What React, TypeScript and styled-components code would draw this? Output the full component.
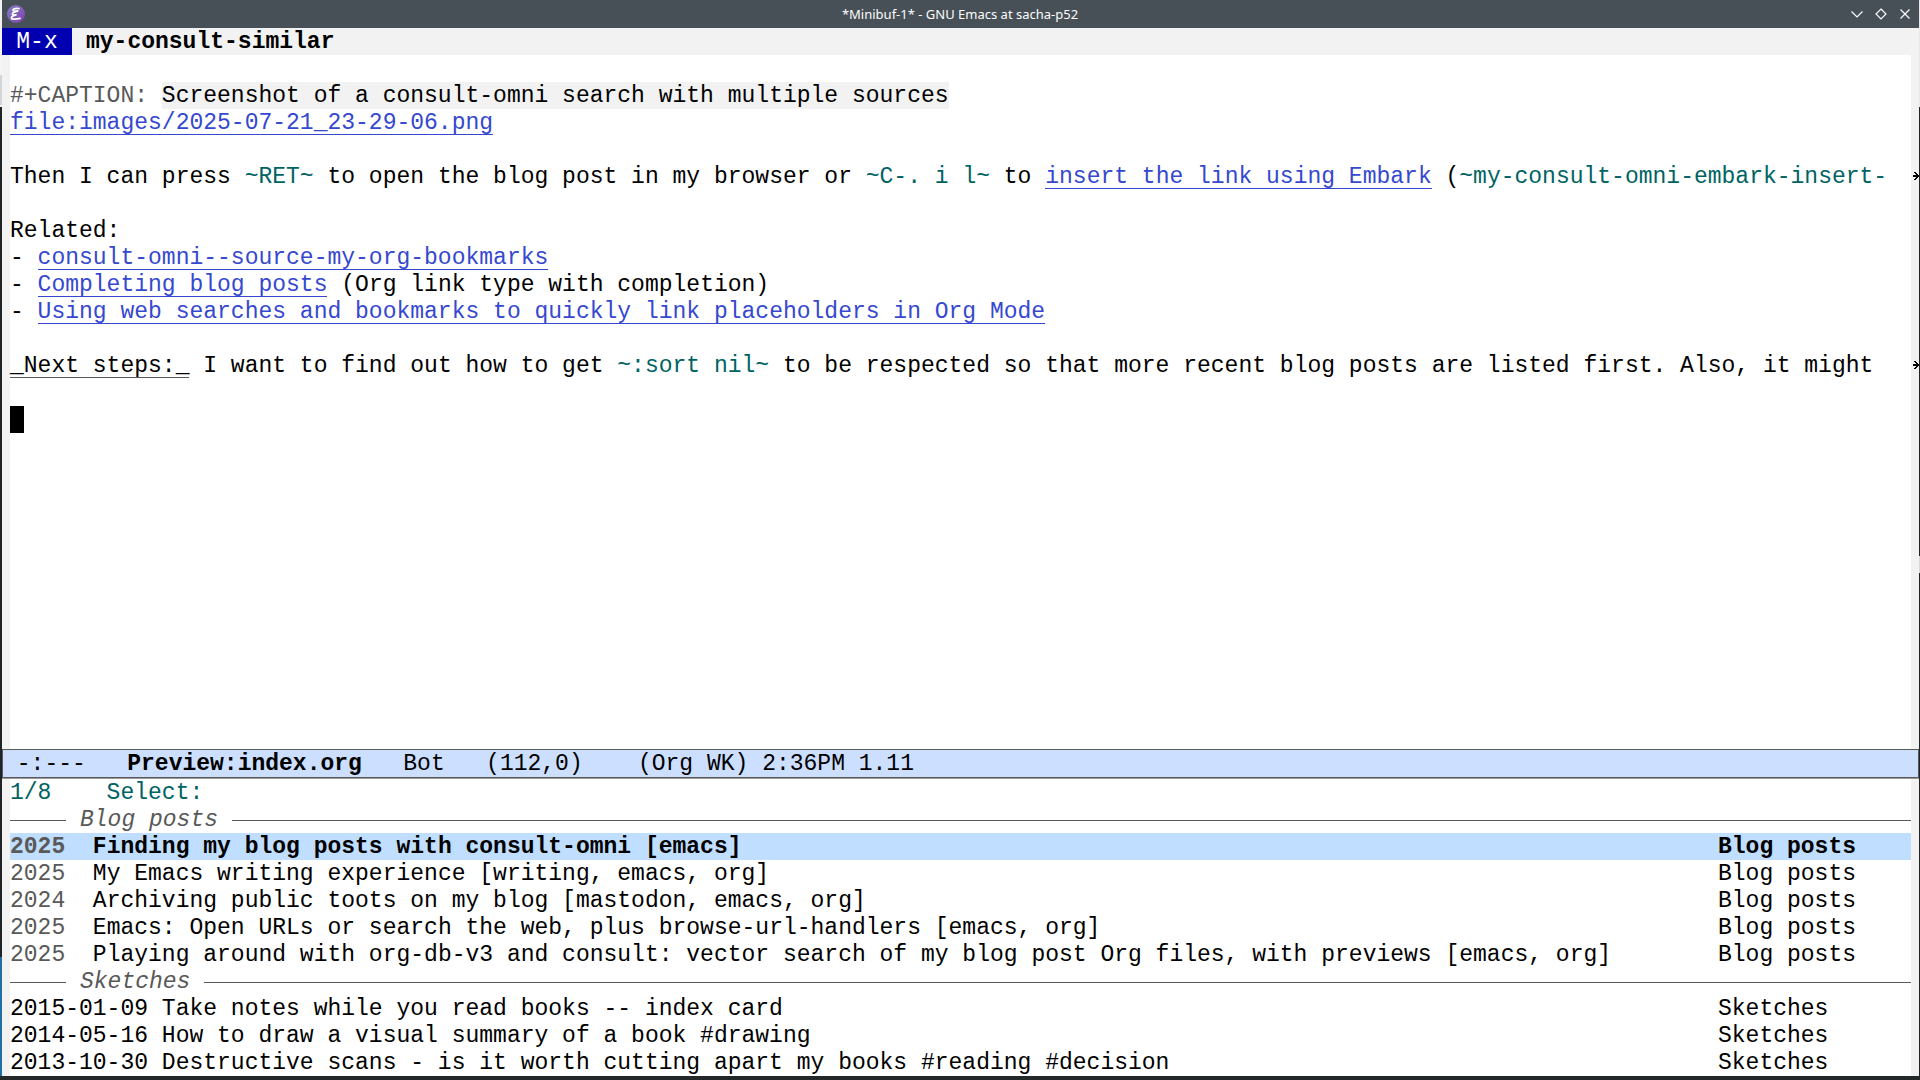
import React from "react";
import styled, { createGlobalStyle, css } from "styled-components";

const mono = '"Liberation Mono", "Courier New", monospace';
const sans = '"Noto Sans", sans-serif';

const GlobalStyle = createGlobalStyle`
  * { box-sizing: border-box; }
  body { margin: 0; background: #232829; }
`;

const Desktop = styled.div`
  display: flex;
  min-height: 100vh;
  padding-bottom: 4px;
  background: #232829;
`;

const LeftEdge = styled.div`
  flex: none;
  width: 2px;
  display: flex;
  flex-direction: column;
`;

const EdgePart = styled.div<{ $color: string; $height?: number }>`
  background: ${(p) => p.$color};
  ${(p) => (p.$height ? css`height: ${p.$height}px;` : css`flex: 1;`)}
`;

const RightEdge = styled(LeftEdge)`
  width: 1px;
`;

const Frame = styled.main`
  flex: 1;
  min-width: 0;
  display: flex;
  flex-direction: column;
  background: #ffffff;
  color: #000000;
  font: 23px/26px ${mono};
`;

const TitleBar = styled.header`
  display: grid;
  grid-template-columns: 84px 1fr 84px;
  align-items: center;
  height: 28px;
  padding: 0 6px 0 5px;
  background: #475057;
  color: #fcfcfc;
`;

const Title = styled.h1`
  margin: 0;
  text-align: center;
  font: 400 13px/18px ${sans};
`;

const Controls = styled.div`
  display: flex;
  justify-content: flex-end;
  gap: 8px;
`;

const ControlButton = styled.button`
  display: flex;
  width: 16px;
  height: 16px;
  padding: 0;
  border: 0;
  background: none;
  color: inherit;
`;

const HeaderLine = styled.div`
  display: flex;
  gap: 14px;
  background: #f2f2f2;
  white-space: pre;
`;

const KeyTag = styled.span`
  width: 70px;
  padding-top: 1px;
  text-align: center;
  background: #0000b0;
  color: #ffffff;
`;

const Command = styled.strong`
  padding-top: 1px;
`;

const Pane = styled.section<{ $grow?: boolean }>`
  display: flex;
  flex-direction: column;
  ${(p) => p.$grow && css`flex: 1;`}
  border: solid #f2f2f2;
  border-width: 0 8px;
`;

const Line = styled.div`
  position: relative;
  height: 27px;
  padding-top: 1px;
  white-space: pre;
`;

const Continuation = styled.svg`
  position: absolute;
  right: -8px;
  top: 9px;
  width: 8px;
  height: 8px;
`;

const Muted = styled.span`
  color: #595959;
`;

const Caption = styled.span`
  padding-top: 1px;
  background: #f2f2f2;
`;

const Verbatim = styled.code`
  font: inherit;
  color: #006363;
`;

const OrgLink = styled.a`
  display: inline-block;
  height: 25px;
  color: #3548cf;
  text-decoration: none;
  box-shadow: inset 0 -1px #3548cf;
`;

const Underlined = styled.span`
  display: inline-block;
  height: 25px;
  box-shadow: inset 0 -1px #595959;
`;

const Cursor = styled.span`
  display: block;
  width: 14px;
  height: 27px;
  margin-top: -1px;
  background: #000000;
`;

const ModeLine = styled.div`
  height: 29px;
  padding-top: 1px;
  border: 1px solid #595959;
  background: #ccdfff;
  white-space: pre;
`;

const Divider = styled.div`
  height: 1px;
  background: #9a9a9a;
`;

const Prompt = styled(Line)`
  color: #006363;
`;

const GroupTitle = styled.h2`
  display: grid;
  grid-template-columns: 56px auto 1fr;
  gap: 14px;
  height: 27px;
  margin: 0;
  color: #595959;
  font: italic 400 23px/26px ${mono};

  &::before,
  &::after {
    content: "";
    height: 1px;
    margin-top: 14px;
    background: #595959;
  }
`;

const GroupName = styled.span`
  padding-top: 1px;
`;

const List = styled.ul`
  margin: 0;
  padding: 0;
  list-style: none;
`;

const Candidate = styled.li<{ $selected?: boolean }>`
  display: grid;
  grid-template-columns: 1fr 193px;
  height: 27px;
  padding-top: 1px;
  white-space: pre;
  ${(p) =>
    p.$selected &&
    css`
      background: #c0deff;
      font-weight: 700;
    `}
`;

function EmacsIcon() {
  return (
    <svg width="20" height="20" viewBox="0 0 20 20" aria-hidden="true">
      <defs>
        <linearGradient id="emacs" x1="0" y1="0" x2="1" y2="1">
          <stop offset="0" stopColor="#8381c5" />
          <stop offset="1" stopColor="#7f3fb0" />
        </linearGradient>
      </defs>
      <circle cx="9" cy="10" r="9" fill="url(#emacs)" />
      <path
        d="M12 4.600C10 4 5.800 4.700 6 6.200c.2 1.200 3 1 4.800.7C8.500 7.600 5.200 8.600 5.400 10c.2 1.200 2.300 1 3.600.9C6.800 11.500 4.200 12.500 4.500 14c.3 1.800 5 1.300 8.500.4"
        fill="none"
        stroke="#ffffff"
        strokeWidth="1.700"
        strokeLinecap="round"
        strokeLinejoin="round"
      />
    </svg>
  );
}

function ControlIcon({ d }: { d: string }) {
  return (
    <svg width="16" height="16" viewBox="0 0 16 16" fill="none" stroke="currentColor" strokeWidth="1.200" aria-hidden="true">
      <path d={d} />
    </svg>
  );
}

function TruncatedMark() {
  return (
    <Continuation viewBox="0 0 8 8" shapeRendering="crispEdges" aria-hidden="true">
      <path d="M3 0h2v1H3zM4 1h2v1H4zM5 2h2v1H5zM2 3h6v2H2zM5 5h2v1H5zM4 6h2v1H4zM3 7h2v1H3z" fill="#000000" />
    </Continuation>
  );
}

const posts = [
  ["2025", "Finding my blog posts with consult-omni [emacs]"],
  ["2025", "My Emacs writing experience [writing, emacs, org]"],
  ["2024", "Archiving public toots on my blog [mastodon, emacs, org]"],
  ["2025", "Emacs: Open URLs or search the web, plus browse-url-handlers [emacs, org]"],
  ["2025", "Playing around with org-db-v3 and consult: vector search of my blog post Org files, with previews [emacs, org]"],
];

const sketches = [
  "2015-01-09 Take notes while you read books -- index card",
  "2014-05-16 How to draw a visual summary of a book #drawing",
  "2013-10-30 Destructive scans - is it worth cutting apart my books #reading #decision",
];

export default function App() {
  return (
    <>
      <GlobalStyle />
      <Desktop>
        <LeftEdge>
          <EdgePart $color="#f4f4f4" $height={75} />
          <EdgePart $color="#d4d4d4" $height={30} />
          <EdgePart $color="#f4f4f4" $height={2} />
          <EdgePart $color="#202426" />
          <EdgePart $color="#1f6fa8" $height={119} />
        </LeftEdge>
        <Frame>
          <TitleBar>
            <EmacsIcon />
            <Title>*Minibuf-1* - GNU Emacs at sacha-p52</Title>
            <Controls>
              <ControlButton aria-label="Minimize">
                <ControlIcon d="M2.500 5.500 8 11l5.500-5.500" />
              </ControlButton>
              <ControlButton aria-label="Maximize">
                <ControlIcon d="M8 3l5 5-5 5-5-5z" />
              </ControlButton>
              <ControlButton aria-label="Close">
                <ControlIcon d="M3.500 3.500l9 9M12.500 3.500l-9 9" />
              </ControlButton>
            </Controls>
          </TitleBar>
          <HeaderLine>
            <KeyTag>M-x</KeyTag>
            <Command>my-consult-similar</Command>
          </HeaderLine>
          <Pane $grow>
            <Line />
            <Line>
              <Muted>#+CAPTION: </Muted>
              <Caption>Screenshot of a consult-omni search with multiple sources</Caption>
            </Line>
            <Line>
              <OrgLink href="#image">file:images/2025-07-21_23-29-06.png</OrgLink>
            </Line>
            <Line />
            <Line>
              Then I can press <Verbatim>~RET~</Verbatim> to open the blog post in my browser or{" "}
              <Verbatim>~C-. i l~</Verbatim> to <OrgLink href="#embark">insert the link using Embark</OrgLink> (
              <Verbatim>~my-consult-omni-embark-insert-</Verbatim>
              <TruncatedMark />
            </Line>
            <Line />
            <Line>Related:</Line>
            <Line>
              - <OrgLink href="#bookmarks">consult-omni--source-my-org-bookmarks</OrgLink>
            </Line>
            <Line>
              - <OrgLink href="#completing">Completing blog posts</OrgLink> (Org link type with completion)
            </Line>
            <Line>
              - <OrgLink href="#searches">Using web searches and bookmarks to quickly link placeholders in Org Mode</OrgLink>
            </Line>
            <Line />
            <Line>
              <Underlined>_Next steps:_</Underlined> I want to find out how to get <Verbatim>~:sort nil~</Verbatim> to be
              respected so that more recent blog posts are listed first. Also, it might
              <TruncatedMark />
            </Line>
            <Line />
            <Line>
              <Cursor />
            </Line>
          </Pane>
          <ModeLine>
            {" -:---   "}
            <strong>Preview:index.org</strong>
            {"   Bot   (112,0)    (Org WK) 2:36PM 1.11"}
          </ModeLine>
          <Divider />
          <Pane>
            <Prompt>{"1/8    Select:"}</Prompt>
            <GroupTitle>
              <GroupName>Blog posts</GroupName>
            </GroupTitle>
            <List>
              {posts.map(([year, title], i) => (
                <Candidate key={title} $selected={i === 0}>
                  <span>
                    <Muted>{year}</Muted>
                    {"  " + title}
                  </span>
                  <span>Blog posts</span>
                </Candidate>
              ))}
            </List>
            <GroupTitle>
              <GroupName>Sketches</GroupName>
            </GroupTitle>
            <List>
              {sketches.map((title) => (
                <Candidate key={title}>
                  <span>{title}</span>
                  <span>Sketches</span>
                </Candidate>
              ))}
            </List>
          </Pane>
        </Frame>
        <RightEdge>
          <EdgePart $color="#e8e8e8" $height={107} />
          <EdgePart $color="#202426" $height={449} />
          <EdgePart $color="#d8d8d8" $height={17} />
          <EdgePart $color="#202426" />
        </RightEdge>
      </Desktop>
    </>
  );
}
